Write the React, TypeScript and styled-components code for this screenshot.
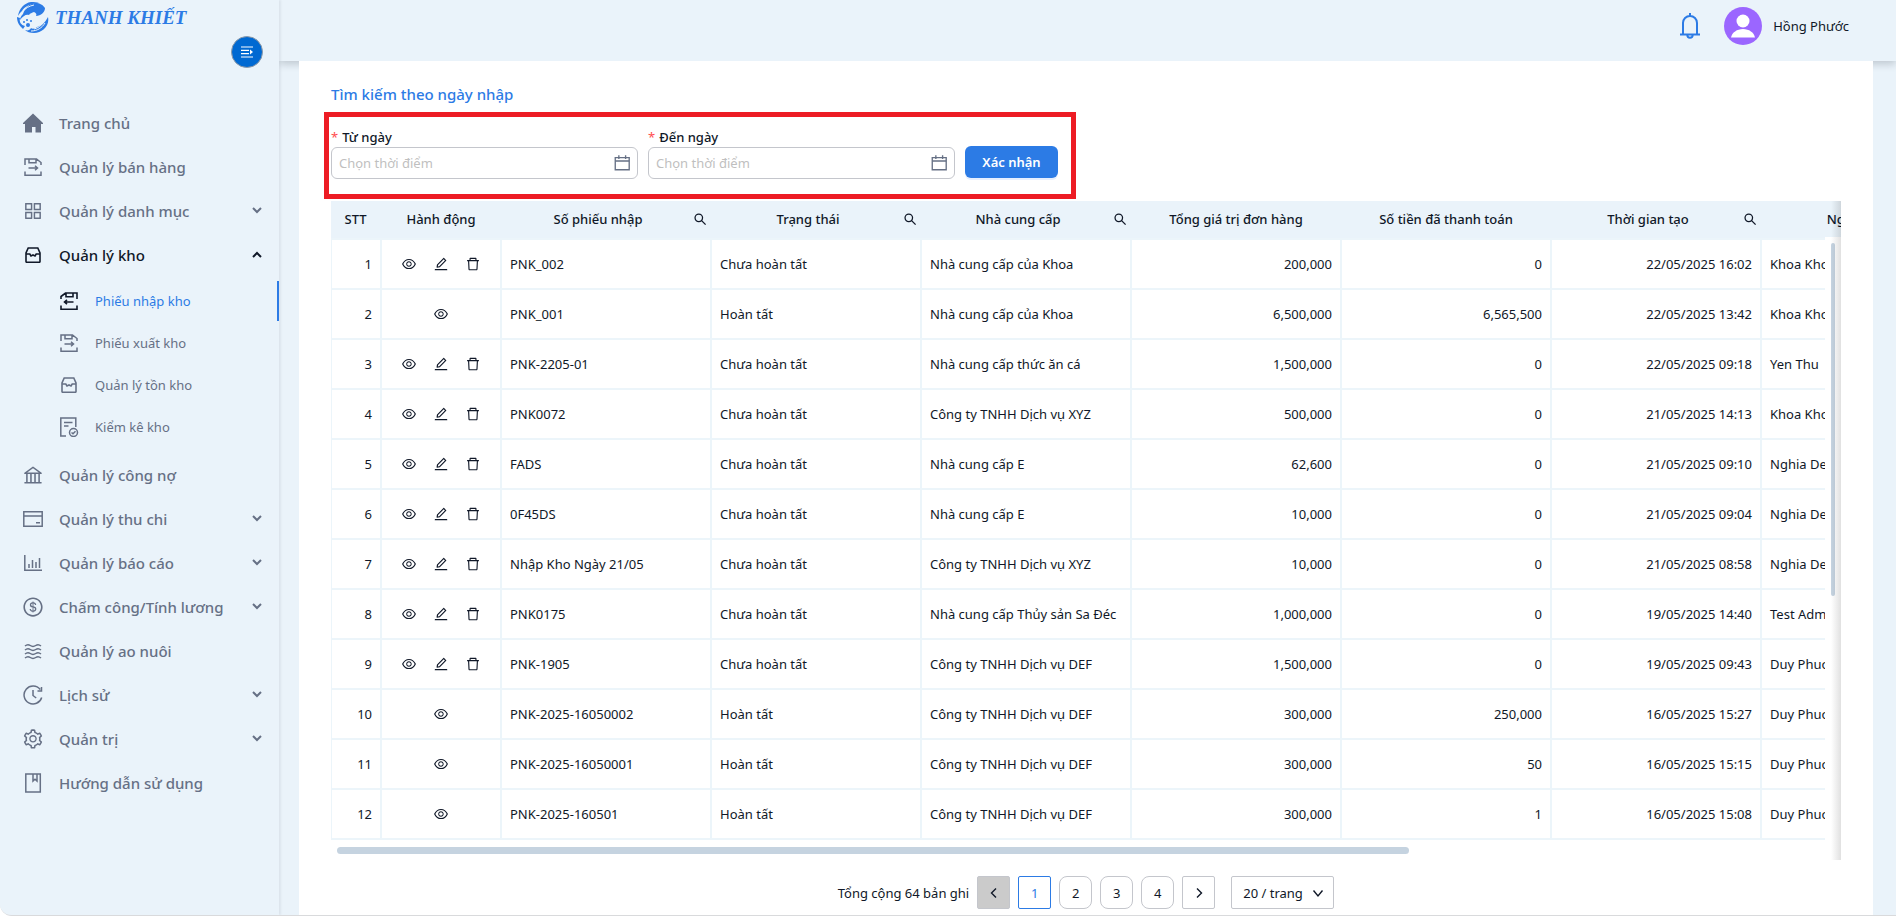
import React from "react";
import styled, { createGlobalStyle, css } from "styled-components";
import {
  AiOutlineAppstore,
  AiOutlineBank,
  AiOutlineDelete,
  AiOutlineDollar,
  AiOutlineEdit,
  AiOutlineEye,
  AiOutlineSetting,
} from "react-icons/ai";

const color = {
  blue: "#2c7be5",
  panel: "#eaf3fa",
  line: "#ecf5fa",
  ink: "#101828",
  muted: "#667085",
  thumb: "#c5d3e0",
  border: "#c4c6cc",
};

const GlobalStyle = createGlobalStyle`
  * { box-sizing: border-box; }
  body {
    margin: 0;
    background: #fff;
    color: ${color.ink};
    font: 400 13px/20px "Noto Sans", "Open Sans", sans-serif;
  }
  button, input, select { font: inherit; color: inherit; }
  svg { display: block; flex: none; }
`;

const Frame = styled.div`
  display: flex;
  min-height: calc(100vh - 2px);
  overflow: hidden;
  background: ${color.panel};
  border-bottom: 1px solid #d9dadc;
  border-radius: 0 0 0 12px;
`;

const Sidebar = styled.aside`
  position: relative;
  z-index: 2;
  flex: none;
  width: 279px;
  background: ${color.panel};
  box-shadow: 2px 0 2px rgba(16, 24, 40, 0.06);
`;

const Brand = styled.div`
  display: flex;
  align-items: center;
  gap: 6px;
  height: 36px;
  padding-left: 17px;
  color: ${color.blue};
  font: italic 700 19px/32px "Liberation Serif", serif;
`;

const ToggleRow = styled.div`
  display: flex;
  justify-content: flex-end;
  height: 67px;
  padding-right: 16px;
`;

const Toggle = styled.button`
  display: grid;
  place-items: center;
  width: 32px;
  height: 32px;
  padding: 0;
  border: 1px solid #8e9aa8;
  border-radius: 50%;
  background: #0069d2;
  color: #fff;
`;

const Menu = styled.nav`
  display: flex;
  flex-direction: column;
  gap: 4px;
`;

const SubMenu = styled.div`
  display: flex;
  flex-direction: column;
  gap: 2px;
  padding: 2px 0 4px;
`;

const MenuLink = styled.a<{ $open?: boolean }>`
  display: flex;
  align-items: center;
  height: 40px;
  padding: 0 16px 0 22px;
  color: ${(p) => (p.$open ? color.ink : color.muted)};
  font-size: 15px;
  font-weight: 500;
  text-decoration: none;
`;

const SubLink = styled.a<{ $active?: boolean }>`
  display: flex;
  align-items: center;
  height: 40px;
  padding-left: 58px;
  border-right: 2px solid ${(p) => (p.$active ? color.blue : "transparent")};
  color: ${(p) => (p.$active ? color.blue : color.muted)};
  text-decoration: none;
`;

const IconSlot = styled.span<{ $dark?: boolean }>`
  display: grid;
  place-items: center;
  width: 22px;
  margin-right: 15px;
  ${(p) => p.$dark && css`color: ${color.ink};`}
`;

const MenuText = styled.span`
  flex: 1;
`;

const Page = styled.div`
  flex: 1;
  min-width: 0;
  display: flex;
  flex-direction: column;
`;

const Header = styled.header`
  display: flex;
  justify-content: flex-end;
  align-items: flex-start;
  height: 61px;
  padding: 7px 47px 0 0;
  box-shadow: 0 3px 8px rgba(16, 24, 40, 0.2);
`;

const HeaderButton = styled.button`
  display: flex;
  align-items: center;
  gap: 11px;
  height: 38px;
  margin-left: 24px;
  padding: 0;
  border: 0;
  background: none;
`;

const BellButton = styled(HeaderButton)`
  color: ${color.blue};
`;

const Content = styled.main`
  position: relative;
  flex: 1;
  margin: 0 23px 0 20px;
  padding: 21px 32px 6px;
  background: #fff;
`;

const Title = styled.h1`
  margin: 0 0 6px;
  color: ${color.blue};
  font-size: 15px;
  line-height: 24px;
  font-weight: 500;
`;

const SearchForm = styled.form`
  display: flex;
  align-items: flex-end;
  gap: 10px;
  width: fit-content;
  margin: 0 0 2px -7px;
  padding: 10px 13px 15px 2px;
  border: 5px solid #ed1c24;
`;

const Field = styled.div`
  width: 307px;
`;

const Label = styled.label`
  display: block;
  height: 20px;
  font-weight: 500;

  &::before {
    content: "*";
    margin-right: 4px;
    color: #ff4d4f;
    font-weight: 400;
  }
`;

const InputBox = styled.div`
  display: flex;
  align-items: center;
  height: 32px;
  padding: 0 6px 0 7px;
  border: 1px solid ${color.border};
  border-radius: 6px;
  color: ${color.muted};
`;

const DateInput = styled.input`
  flex: 1;
  min-width: 0;
  padding: 0;
  border: 0;
  outline: 0;
  background: none;

  &::placeholder {
    color: #bfbfbf;
    opacity: 1;
  }
`;

const Submit = styled.button`
  width: 93px;
  height: 32px;
  margin-bottom: 1px;
  padding: 0;
  border: 0;
  border-radius: 6px;
  background: ${color.blue};
  box-shadow: 0 2px 0 rgba(5, 95, 255, 0.1);
  color: #fff;
  font-weight: 600;
`;

const TableBox = styled.div`
  position: relative;
  overflow: hidden;
  padding-bottom: 20px;
`;

const Table = styled.table`
  width: 1851px;
  table-layout: fixed;
  border-collapse: separate;
  border-spacing: 0;
`;

const Col = styled.col<{ $w: number }>`
  width: ${(p) => p.$w}px;
`;

const Th = styled.th`
  height: 39px;
  padding: 0 10px 2px 8px;
  border-bottom: 2px solid ${color.line};
  background: ${color.panel};
  font-weight: 500;
  text-align: center;
  white-space: nowrap;
`;

const HeadCell = styled.div`
  display: flex;
  align-items: center;
  justify-content: center;
`;

const HeadText = styled.span`
  flex: 1;
`;

const SearchButton = styled.button`
  display: flex;
  margin: 0 -6px 0 6px;
  padding: 0;
  border: 0;
  background: none;
`;

const Td = styled.td<{ $align?: "right" | "center" }>`
  height: 50px;
  padding: 0 8px;
  border-right: 2px solid ${color.line};
  border-bottom: 2px solid ${color.line};
  text-align: ${(p) => p.$align ?? "left"};
  white-space: nowrap;

  &:first-child {
    border-left: 1px solid ${color.line};
  }
`;

const Actions = styled.div`
  display: flex;
  justify-content: center;
  gap: 16px;
`;

const ActionButton = styled.button`
  padding: 0;
  border: 0;
  background: none;
`;

const ScrollTrack = styled.div`
  position: absolute;
  top: 36px;
  right: 0;
  bottom: 0;
  width: 16px;
  padding: 6px;
  background: #fff;
`;

const ScrollThumb = styled.div`
  width: 4px;
  height: 353px;
  border-radius: 2px;
  background: ${color.thumb};
`;

const BottomThumb = styled.div`
  position: absolute;
  left: 6px;
  bottom: 6px;
  width: 71%;
  height: 7px;
  border-radius: 4px;
  background: ${color.thumb};
`;

const EdgeShadow = styled.div`
  position: absolute;
  inset: 0 0 0 auto;
  width: 10px;
  background: linear-gradient(to right, rgba(5, 5, 5, 0), rgba(5, 5, 5, 0.12));
`;

const Pagination = styled.div`
  display: flex;
  justify-content: center;
  align-items: center;
  gap: 8px;
  margin-top: 16px;
`;

const PageButton = styled.button<{ $kind?: "prev" | "current" | "next" }>`
  display: grid;
  place-items: center;
  width: 33px;
  height: 33px;
  padding: 0;
  border: 1px solid ${(p) => (p.$kind === "current" ? color.blue : color.border)};
  border-radius: ${(p) => (p.$kind ? 2 : 8)}px;
  background: ${(p) => (p.$kind === "prev" ? "#cbcbcb" : "#fff")};
  color: ${(p) => (p.$kind === "current" ? color.blue : color.ink)};
`;

const SizeBox = styled.label`
  display: grid;
  align-items: center;
  margin-left: 8px;

  > * { grid-area: 1 / 1; }
  > svg { justify-self: end; margin-right: 10px; pointer-events: none; }
`;

const SizeSelect = styled.select`
  width: 103px;
  height: 33px;
  padding: 0 11px;
  border: 1px solid ${color.border};
  border-radius: 2px;
  background: #fff;
  appearance: none;
`;

/* ---------- icons ---------- */

const Line = ({ size = 20, w = 1.5, children }: { size?: number; w?: number; children: React.ReactNode }) => (
  <svg width={size} height={size} viewBox="0 0 20 20" fill="none" stroke="currentColor" strokeWidth={w} aria-hidden>
    {children}
  </svg>
);

const LogoMark = () => (
  <svg width="32" height="32" viewBox="0 0 32 32" fill="currentColor" aria-hidden>
    <path d="M6 12C8 6 12 2 18 1c5 0 8 2 10 5 0 4-4 8-9 8 1-2 0-3-2-4-2 1-4 1-5 3-3-1-6 1-9 5 0-2 1-4 3-6z" />
    <path d="M1 14C2 7 7 1 14 0c3 0 6 0 8 1C14 1 7 5 5 9c-2 2-3 3-4 5z" />
    <path d="M5 10c4-4 7-6 12-7" fill="none" stroke="#eaf3fa" />
    <path d="M31 15c2 9-6 16-14 16-4 0-7-1-9-3 3 1 5 0 6-2 1 1 4 1 6-1 4-1 8-4 11-10z" />
    <path d="M14 29c6 0 11-3 14-8M17 27c4-1 7-3 10-7" fill="none" stroke="#eaf3fa" />
    <path d="M0 15c0 6 3 9 6 12l2-3c-4-1-6-4-5-8z" />
    <circle cx="11" cy="23" r="2" />
    <circle cx="7" cy="20" r="1" />
    <circle cx="14" cy="19" r="1" />
    <circle cx="10" cy="18" r="1" />
  </svg>
);

const ToggleIcon = () => (
  <svg width="14" height="12" viewBox="0 0 14 12" aria-hidden>
    <path d="M1 1h12M1 4.300h8M1 7.700h8M1 11h12" stroke="#fff" strokeWidth="1.200" />
    <path d="M10 3.500v5L13 6z" fill="#fff" />
  </svg>
);

const HomeIcon = () => (
  <svg width="20" height="20" viewBox="0 0 20 20" fill="currentColor" aria-hidden>
    <path d="M10 .5 20 10v1h-2v8.500h-5.500V14h-3.500v5.500H2V11H0v-1z" />
  </svg>
);
const OutIcon = () => (
  <Line>
    <path d="M2 8V2h11.500L18 5.500V8M6 2v3.700h7V2M2 14.500V18.200h16v-3.700M5.500 11h9M12 8.800l2.500 2.200-2.500 2.200" />
  </Line>
);
const InIcon = () => (
  <Line w={1.6}>
    <path d="M18 8V2H6.500L2 5.500V8M14 2v3.700H7V2M2 14.500V18.200h16v-3.700M14.500 11h-9M8 8.800 5.500 11l2.500 2.200" />
  </Line>
);
const BoxIcon = () => (
  <Line w={1.6}>
    <path d="M5.200 3h9.600L17 8v8.500a.8.8 0 0 1-.8.8H3.800a.8.8 0 0 1-.8-.8V8zM3 9h3.800l1.200 2 2-1 2 1 1.200-2H17" />
  </Line>
);
const CheckDocIcon = () => (
  <Line>
    <path d="M7 19H1.800V1h15v9M5 5.500h8.500M5 9h4.500" />
    <circle cx="14.500" cy="15.500" r="4" />
    <path d="m12.500 15.500 1.500 1.300 2.500-2.500" />
  </Line>
);
const CardIcon = () => (
  <Line>
    <path d="M.8 2.800h18.400v14.500H.8zM.8 7h18.400M13 13.800h4" />
  </Line>
);
const ChartIcon = () => (
  <Line>
    <path d="M1.800 2v15.200H19M6 15v-4M9.500 15V7M13 15V9M16.500 15V5" />
  </Line>
);
const WaveIcon = () => (
  <Line w={1.4}>
    {[4, 8, 12, 16].map((y) => (
      <path key={y} d={`M2 ${y + 1}c2-1.800 3.500-1.800 5.300-.5s3.600 1.300 5.400 0 3.300-1.300 5.300.5`} />
    ))}
  </Line>
);
const HistoryIcon = () => (
  <Line>
    <path d="M18.700 12.500a9 9 0 1 1-1.500-8M18.500 2v4h-4M10 5v5.500l3.200 2.500" />
  </Line>
);
const BookIcon = () => (
  <Line>
    <path d="M2.800 1h14.500v18H2.800zM10 1v7l2-1.800L14 8V1" />
  </Line>
);
const SearchIcon = () => (
  <Line size={16} w={1.6}>
    <circle cx="8.500" cy="8.500" r="4.700" />
    <path d="m12 12 5 5" />
  </Line>
);
const CalendarIcon = () => (
  <Line size={18}>
    <path d="M2.500 4h15.500v13.500H2.500z" />
    <path d="M2.500 7.800h15.500M6.500 1.500v4M14 1.500v4" />
  </Line>
);
const Chevron = ({ up }: { up?: boolean }) => (
  <svg width="12" height="12" viewBox="0 0 12 12" fill="none" stroke="currentColor" strokeWidth="2" aria-hidden>
    <path d={up ? "M2 8l4-4 4 4" : "M2 3l4 4 4-4"} />
  </svg>
);
const Arrow = ({ d }: { d: string }) => (
  <svg width="12" height="12" viewBox="0 0 12 12" fill="none" stroke="currentColor" strokeWidth="1.4" aria-hidden>
    <path d={d} />
  </svg>
);
const BellIcon = () => (
  <svg width="20" height="26" viewBox="0 0 20 26" fill="none" stroke="currentColor" strokeWidth="2" aria-hidden>
    <path d="M10 0v3M3 21V10a7 7 0 0 1 14 0v11M0 21.500h20M7.300 22a2.700 2.700 0 0 0 5.400 0" />
  </svg>
);
const AvatarIcon = () => (
  <svg width="38" height="38" viewBox="0 0 38 38" aria-hidden>
    <circle cx="19" cy="19" r="19" fill="#9b66ff" />
    <circle cx="19" cy="14" r="6.500" fill="#fff" />
    <path d="M7 30.500c1-5 6-8.500 12-8.500s11 3.500 12 8.500z" fill="#fff" />
  </svg>
);

/* ---------- data ---------- */

type Item = { text: string; icon: React.ReactNode; more?: boolean; open?: boolean };

const topItems: Item[] = [
  { text: "Trang chủ", icon: <HomeIcon /> },
  { text: "Quản lý bán hàng", icon: <OutIcon /> },
  { text: "Quản lý danh mục", icon: <AiOutlineAppstore size={22} />, more: true },
  { text: "Quản lý kho", icon: <BoxIcon />, open: true },
];

const subItems = [
  { text: "Phiếu nhập kho", icon: <InIcon />, active: true },
  { text: "Phiếu xuất kho", icon: <OutIcon /> },
  { text: "Quản lý tồn kho", icon: <BoxIcon /> },
  { text: "Kiểm kê kho", icon: <CheckDocIcon /> },
];

const bottomItems: Item[] = [
  { text: "Quản lý công nợ", icon: <AiOutlineBank size={22} /> },
  { text: "Quản lý thu chi", icon: <CardIcon />, more: true },
  { text: "Quản lý báo cáo", icon: <ChartIcon />, more: true },
  { text: "Chấm công/Tính lương", icon: <AiOutlineDollar size={22} />, more: true },
  { text: "Quản lý ao nuôi", icon: <WaveIcon /> },
  { text: "Lịch sử", icon: <HistoryIcon />, more: true },
  { text: "Quản trị", icon: <AiOutlineSetting size={22} />, more: true },
  { text: "Hướng dẫn sử dụng", icon: <BookIcon /> },
];

const columns = [
  { text: "STT", width: 51 },
  { text: "Hành động", width: 120 },
  { text: "Số phiếu nhập", width: 210, search: true },
  { text: "Trạng thái", width: 210, search: true },
  { text: "Nhà cung cấp", width: 210, search: true },
  { text: "Tổng giá trị đơn hàng", width: 210 },
  { text: "Số tiền đã thanh toán", width: 210 },
  { text: "Thời gian tạo", width: 210, search: true },
  { text: "Người tạo", width: 210, search: true },
  { text: "", width: 210 },
];

const rows: [string, boolean, string, string, string, string, string][] = [
  ["PNK_002", false, "Nhà cung cấp của Khoa", "200,000", "0", "22/05/2025 16:02", "Khoa Khoa"],
  ["PNK_001", true, "Nhà cung cấp của Khoa", "6,500,000", "6,565,500", "22/05/2025 13:42", "Khoa Khoa"],
  ["PNK-2205-01", false, "Nhà cung cấp thức ăn cá", "1,500,000", "0", "22/05/2025 09:18", "Yen Thu"],
  ["PNK0072", false, "Công ty TNHH Dịch vụ XYZ", "500,000", "0", "21/05/2025 14:13", "Khoa Khoa"],
  ["FADS", false, "Nhà cung cấp E", "62,600", "0", "21/05/2025 09:10", "Nghia Demo"],
  ["0F45DS", false, "Nhà cung cấp E", "10,000", "0", "21/05/2025 09:04", "Nghia Demo"],
  ["Nhập Kho Ngày 21/05", false, "Công ty TNHH Dịch vụ XYZ", "10,000", "0", "21/05/2025 08:58", "Nghia Demo"],
  ["PNK0175", false, "Nhà cung cấp Thủy sản Sa Đéc", "1,000,000", "0", "19/05/2025 14:40", "Test Admin"],
  ["PNK-1905", false, "Công ty TNHH Dịch vụ DEF", "1,500,000", "0", "19/05/2025 09:43", "Duy Phuoc"],
  ["PNK-2025-16050002", true, "Công ty TNHH Dịch vụ DEF", "300,000", "250,000", "16/05/2025 15:27", "Duy Phuoc"],
  ["PNK-2025-16050001", true, "Công ty TNHH Dịch vụ DEF", "300,000", "50", "16/05/2025 15:15", "Duy Phuoc"],
  ["PNK-2025-160501", true, "Công ty TNHH Dịch vụ DEF", "300,000", "1", "16/05/2025 15:08", "Duy Phuoc"],
];

const MenuEntry = ({ item }: { item: Item }) => (
  <MenuLink href="#" $open={item.open}>
    <IconSlot>{item.icon}</IconSlot>
    <MenuText>{item.text}</MenuText>
    {(item.more || item.open) && <Chevron up={item.open} />}
  </MenuLink>
);

const DateField = ({ id, label }: { id: string; label: string }) => (
  <Field>
    <Label htmlFor={id}>{label}</Label>
    <InputBox>
      <DateInput id={id} placeholder="Chọn thời điểm" />
      <CalendarIcon />
    </InputBox>
  </Field>
);

export default function App() {
  return (
    <>
      <GlobalStyle />
      <Frame>
        <Sidebar>
          <Brand>
            <LogoMark />
            <span>THANH KHIẾT</span>
          </Brand>
          <ToggleRow>
            <Toggle type="button" aria-label="Thu gọn menu">
              <ToggleIcon />
            </Toggle>
          </ToggleRow>
          <Menu>
            {topItems.map((item) => (
              <MenuEntry key={item.text} item={item} />
            ))}
            <SubMenu>
              {subItems.map((s) => (
                <SubLink key={s.text} href="#" $active={s.active}>
                  <IconSlot $dark={s.active}>{s.icon}</IconSlot>
                  {s.text}
                </SubLink>
              ))}
            </SubMenu>
            {bottomItems.map((item) => (
              <MenuEntry key={item.text} item={item} />
            ))}
          </Menu>
        </Sidebar>
        <Page>
          <Header>
            <BellButton type="button" aria-label="Thông báo">
              <BellIcon />
            </BellButton>
            <HeaderButton type="button">
              <AvatarIcon />
              Hồng Phước
            </HeaderButton>
          </Header>
          <Content>
            <Title>Tìm kiếm theo ngày nhập</Title>
            <SearchForm>
              <DateField id="from" label="Từ ngày" />
              <DateField id="to" label="Đến ngày" />
              <Submit type="button">Xác nhận</Submit>
            </SearchForm>
            <TableBox>
              <Table>
                <colgroup>
                  {columns.map((c, i) => (
                    <Col key={i} $w={c.width} />
                  ))}
                </colgroup>
                <thead>
                  <tr>
                    {columns.map((c, i) => (
                      <Th key={i}>
                        <HeadCell>
                          <HeadText>{c.text}</HeadText>
                          {c.search && (
                            <SearchButton type="button" aria-label={`Tìm ${c.text}`}>
                              <SearchIcon />
                            </SearchButton>
                          )}
                        </HeadCell>
                      </Th>
                    ))}
                  </tr>
                </thead>
                <tbody>
                  {rows.map(([code, done, supplier, total, paid, time, user], i) => (
                    <tr key={code}>
                      <Td $align="right">{i + 1}</Td>
                      <Td>
                        <Actions>
                          <ActionButton type="button" aria-label="Xem">
                            <AiOutlineEye size={16} />
                          </ActionButton>
                          {!done && (
                            <>
                              <ActionButton type="button" aria-label="Sửa">
                                <AiOutlineEdit size={16} />
                              </ActionButton>
                              <ActionButton type="button" aria-label="Xóa">
                                <AiOutlineDelete size={16} />
                              </ActionButton>
                            </>
                          )}
                        </Actions>
                      </Td>
                      <Td>{code}</Td>
                      <Td>{done ? "Hoàn tất" : "Chưa hoàn tất"}</Td>
                      <Td>{supplier}</Td>
                      <Td $align="right">{total}</Td>
                      <Td $align="right">{paid}</Td>
                      <Td $align="right">{time}</Td>
                      <Td>{user}</Td>
                      <Td />
                    </tr>
                  ))}
                </tbody>
              </Table>
              <ScrollTrack>
                <ScrollThumb />
              </ScrollTrack>
              <BottomThumb />
              <EdgeShadow />
            </TableBox>
            <Pagination>
              <span>Tổng cộng 64 bản ghi</span>
              <PageButton type="button" $kind="prev" aria-label="Trang trước">
                <Arrow d="M8 1.500 3.500 6 8 10.500" />
              </PageButton>
              <PageButton type="button" $kind="current">1</PageButton>
              <PageButton type="button">2</PageButton>
              <PageButton type="button">3</PageButton>
              <PageButton type="button">4</PageButton>
              <PageButton type="button" $kind="next" aria-label="Trang sau">
                <Arrow d="M4 1.500 8.500 6 4 10.500" />
              </PageButton>
              <SizeBox>
                <SizeSelect aria-label="Số bản ghi mỗi trang">
                  <option>20 / trang</option>
                </SizeSelect>
                <Arrow d="M1.500 3.500 6 9l4.500-5.500" />
              </SizeBox>
            </Pagination>
          </Content>
        </Page>
      </Frame>
    </>
  );
}
